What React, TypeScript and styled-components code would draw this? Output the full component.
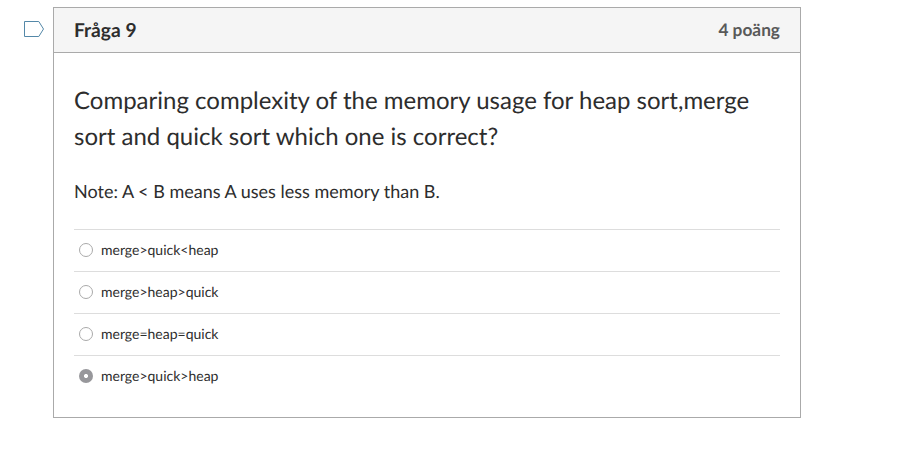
import React from "react";
import styled, { createGlobalStyle } from "styled-components";

const GlobalStyle = createGlobalStyle`
  * { box-sizing: border-box; }
  body { margin: 0; background: #fff; color: #2d2d2d; font-family: Lato, "Liberation Sans", sans-serif; text-rendering: geometricPrecision; }
`;
const Page = styled.main`
  display: flex;
  align-items: flex-start;
  padding: 7px 0 0 23px;
`;
const Flag = styled.svg`
  flex: none;
  width: 22px;
  height: 18px;
  margin: 13px 8px 0 0;
`;
const Card = styled.section`
  width: 748px;
  height: 411px;
  border: 1px solid #aaa;
`;
const Header = styled.header`
  display: flex;
  justify-content: space-between;
  align-items: center;
  height: 45px;
  padding: 0 20px;
  background: #f5f5f5;
  border-bottom: 1px solid #aaa;
`;
const Title = styled.h2`
  margin: 0;
  padding-top: 2px;
  font-size: 19.2px;
  line-height: 24px;
`;
const Points = styled.span`
  font-size: 17.3px;
  font-weight: 700;
  line-height: 24px;
  color: #595959;
`;
const Body = styled.div`
  padding: 30px 20px 0;
`;
const Question = styled.p`
  margin: 0;
  font-size: 24px;
  line-height: 36px;
`;
const Note = styled.p`
  margin: 23px 0 24px;
  font-size: 18px;
  line-height: 27px;
`;
const Answer = styled.label`
  display: flex;
  align-items: center;
  height: 42px;
  padding: 0 0 1px 5px;
  border-top: 1px solid #ddd;
  font-size: 14px;
  line-height: 18px;
`;
const Radio = styled.input`
  appearance: none;
  flex: none;
  width: 14px;
  height: 14px;
  margin: 0 8px 0 0;
  border: 1px solid #aaa;
  border-radius: 50%;
  background: #fff;
  &:checked {
    border: 0;
    background: radial-gradient(circle, #fff 0 1.6px, #97979b 2.4px);
  }
`;
const answers = ["merge>quick<heap", "merge>heap>quick", "merge=heap=quick", "merge>quick>heap"];

export default function App() {
  return (
    <>
      <GlobalStyle />
      <Page>
        <Flag viewBox="0 0 22 18" fill="none" stroke="#5488a8">
          <path d="M1.5 1.5H15.8L20.5 9L15.8 16.5H1.5Z" />
        </Flag>
        <Card>
          <Header>
            <Title>Fråga 9</Title>
            <Points>4 poäng</Points>
          </Header>
          <Body>
            <Question>Comparing complexity of the memory usage for heap sort,merge<br />sort and quick sort which one is correct?</Question>
            <Note>Note: A &lt; B means A uses less memory than B.</Note>
            {answers.map((answer, index) => (
              <Answer key={answer}>
                <Radio type="radio" name="answer" defaultChecked={index === 3} />
                {answer}
              </Answer>
            ))}
          </Body>
        </Card>
      </Page>
    </>
  );
}
